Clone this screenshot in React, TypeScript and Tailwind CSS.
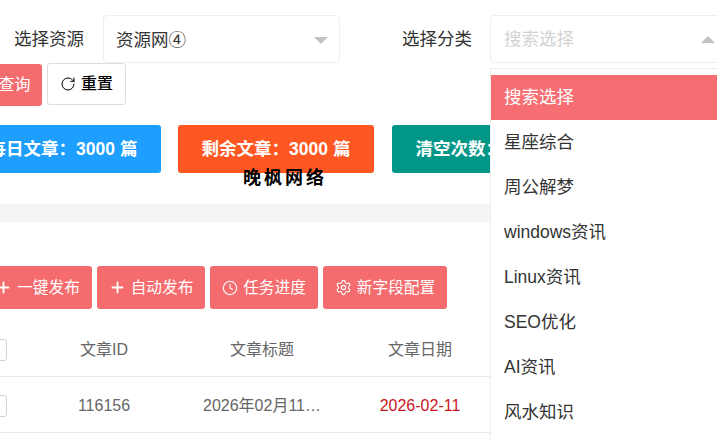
import { Clock, Plus, RotateCw, Settings } from "lucide-react"

const FONT = "font-['Liberation_Sans','Noto_Sans_CJK_SC',sans-serif]"

const categories = ["星座综合", "周公解梦", "windows资讯", "Linux资讯", "SEO优化", "AI资讯", "风水知识"]

function Caret({ up }: { up?: boolean }) {
  return (
    <span
      className={
        up
          ? "border-x-[7px] border-b-[7px] border-x-transparent border-b-[#c2c2c2]"
          : "border-x-[7px] border-t-[7px] border-x-transparent border-t-[#c2c2c2]"
      }
    />
  )
}

function ActionButton({ icon, label, className }: { icon: React.ReactNode; label: string; className: string }) {
  return (
    <button className={`flex h-[43px] shrink-0 items-center justify-center gap-[5px] rounded-[3px] bg-[#f56c6f] text-[15.7px] text-white ${className}`}>
      {icon}
      {label}
    </button>
  )
}

export default function App() {
  return (
    <div className={`relative h-[441px] w-[717px] overflow-hidden bg-white ${FONT}`}>
      {/* filter row */}
      <div className="mt-[15px] flex h-[48px] items-center pl-[14px]">
        <span className="w-[72px] shrink-0 whitespace-nowrap text-[17.5px] text-[#333]">选择资源</span>
        <div className="ml-[17px] flex h-[48px] w-[237px] shrink-0 items-center justify-between rounded-[4px] border border-[#eeeeee] pl-[12px] pr-[11px] pt-[3px] text-[17.5px] text-[#333]">
          资源网④
          <Caret />
        </div>
        <span className="ml-[62px] w-[72px] shrink-0 whitespace-nowrap text-[17.5px] text-[#333]">选择分类</span>
        <div className="ml-[16px] flex h-[48px] w-[240px] shrink-0 items-center justify-between rounded-[4px] border border-[#eeeeee] pl-[13px] pr-[14px] text-[17.5px] text-[#d2d2d2]">
          搜索选择
          <Caret up />
        </div>
      </div>

      <div className="-ml-[20px] flex items-start gap-[5px]">
        <button className="mt-[1px] h-[42px] w-[62px] rounded-[3px] bg-[#f56c6f] pl-[7px] text-base text-white">查询</button>
        <button className="flex h-[42px] w-[79px] items-center justify-center gap-[5px] rounded-[3px] border border-[#dddddd] text-base font-medium text-black">
          <RotateCw size={16} strokeWidth={1.5} />
          重置
        </button>
      </div>

      {/* stat cards */}
      <div className="-ml-[35px] mt-[19px] flex gap-[17px] text-[17.5px] font-bold text-white">
        <div className="flex h-[48px] w-[196px] shrink-0 items-center justify-center rounded-[3px] bg-[#1e9fff]">每日文章：3000 篇</div>
        <div className="flex h-[48px] w-[196px] shrink-0 items-center justify-center rounded-[3px] bg-[#ff5722]">剩余文章：3000 篇</div>
        <div className="ml-[1px] flex h-[48px] w-[196px] shrink-0 items-center justify-center rounded-[3px] bg-[#009688]">清空次数：3000 次</div>
      </div>

      <div className="mt-[31px] h-[18px] bg-[#f5f5f5]" />

      {/* toolbar */}
      <div className="-ml-[20px] mt-[44px] flex gap-[5px]">
        <ActionButton className="w-[112px] pl-[3px]" icon={<Plus size={17} strokeWidth={2.6} />} label="一键发布" />
        <ActionButton className="w-[108px]" icon={<Plus size={17} strokeWidth={2.6} />} label="自动发布" />
        <ActionButton className="w-[108px]" icon={<Clock size={16} strokeWidth={1.6} />} label="任务进度" />
        <ActionButton className="w-[124px]" icon={<Settings size={17} strokeWidth={1.6} />} label="新字段配置" />
      </div>

      {/* table */}
      <div className="-ml-[15px] text-base text-[#666666]">
        <div className="flex h-[68px] items-center border-b border-[#e8e8e8] pt-[15px]">
          <span className="h-[22px] w-[22px] shrink-0 rounded-[3px] border border-[#d2d2d2]" />
          <span className="ml-[18px] w-[158px] text-center">文章ID</span>
          <span className="w-[158px] text-center">文章标题</span>
          <span className="w-[158px] text-center">文章日期</span>
        </div>
        <div className="flex h-[56px] items-center border-b border-[#e8e8e8] pt-[3px]">
          <span className="h-[22px] w-[22px] shrink-0 rounded-[3px] border border-[#d2d2d2]" />
          <span className="ml-[18px] w-[158px] text-center">116156</span>
          <span className="w-[158px] pl-[20px] pr-[16px]">
            <span className="block truncate">2026年02月11日文章</span>
          </span>
          <span className="w-[158px] text-center text-[#c8161d]">2026-02-11</span>
        </div>
      </div>

      {/* watermark */}
      <span className="absolute left-[243px] top-[165px] text-[18px] font-bold tracking-[3px] text-black">晚枫网络</span>

      {/* open dropdown */}
      <div className="absolute left-[490px] top-[68px] h-[373px] w-[227px] overflow-hidden border-l border-t border-[#eeeeee] bg-white pt-[6px] text-[17.5px] text-[#333]">
        <div className="flex h-[45px] items-center bg-[#f76e72] pl-[13px] text-white">搜索选择</div>
        {categories.map((name) => (
          <div key={name} className="flex h-[45px] items-center pl-[13px]">{name}</div>
        ))}
      </div>
    </div>
  )
}
